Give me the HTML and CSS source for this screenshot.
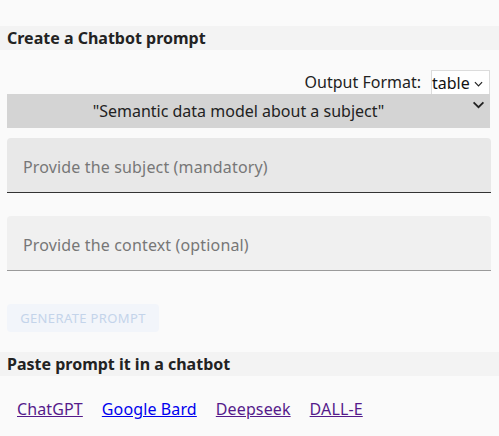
FILE: index.html
```html
<!DOCTYPE html>
<html>
<head>
<meta charset="utf-8">
<link rel="stylesheet" href="styles.css">
</head>
<body>
<div class="page">
  <h2 class="section-title">Create a Chatbot prompt</h2>
  <div class="form">
    <div class="format-row">
      <span class="format-label">Output Format:</span>
      <div class="small-select">table<svg class="small-chev" viewBox="0 0 10 6" width="9" height="6"><path d="M1 1 L5 5 L9 1" fill="none" stroke="#222" stroke-width="1.3"/></svg></div>
    </div>
    <div class="big-select">
      <span>"Semantic data model about a subject"</span>
      <svg class="big-chev" viewBox="0 0 14 9" width="13" height="8"><path d="M1.5 1.5 L7 7 L12.5 1.5" fill="none" stroke="#222" stroke-width="2"/></svg>
    </div>
    <div class="field field-filled"><span class="placeholder">Provide the subject (mandatory)</span></div>
    <div class="field field-light"><span class="placeholder">Provide the context (optional)</span></div>
    <div class="button-row"><button class="gen-btn" disabled>GENERATE PROMPT</button></div>
  </div>
  <h2 class="section-title second">Paste prompt it in a chatbot</h2>
  <div class="links">
    <a class="link visited" href="#">ChatGPT</a>
    <a class="link" href="#">Google Bard</a>
    <a class="link visited" href="#">Deepseek</a>
    <a class="link visited" href="#">DALL-E</a>
  </div>
</div>
</body>
</html>
```

FILE: styles.css
```css
html, body {
  margin: 0;
  padding: 0;
  background: #fafafa;
}
body {
  font-family: "Noto Sans", "Open Sans", sans-serif;
  color: #222;
  width: 499px;
  height: 436px;
  overflow: hidden;
}
.page {
  padding-top: 26px;
}
.section-title {
  margin: 0;
  height: 24px;
  line-height: 24px;
  background: #f3f3f3;
  padding-left: 7px;
  font-size: 16px;
  font-weight: 700;
  color: #222;
}
.form {
  padding: 20px 9px 0 7px;
}
.format-row {
  display: flex;
  justify-content: flex-end;
  align-items: center;
  height: 24px;
}
.format-label {
  font-size: 16px;
  color: #222;
  margin-right: 10px;
}
.small-select {
  box-sizing: border-box;
  width: 59px;
  height: 24px;
  background: #fff;
  border: 1px solid #dcdcdc;
  border-bottom: none;
  font-size: 16px;
  line-height: 24px;
  padding-left: 0;
  padding-top: 1px;
  display: flex;
  align-items: center;
  gap: 4px;
  color: #111;
}
.small-chev {
  margin-top: 2px;
}
.big-select {
  position: relative;
  height: 34px;
  background: #d4d4d4;
  display: flex;
  align-items: center;
  justify-content: center;
  padding-right: 20px;
  font-size: 16px;
  color: #222;
}
.big-chev {
  position: absolute;
  right: 5px;
  top: 7px;
}
.field {
  box-sizing: border-box;
  height: 55px;
  margin-top: 10px;
  border-radius: 4px 4px 0 0;
  display: flex;
  align-items: center;
  padding-left: 16px;
  margin-right: -1px;
}
.field-filled {
  background: #e8e8e8;
  border-bottom: 1px solid #333;
}
.field-light {
  margin-top: 23px;
  background: #f0f0f0;
  border-bottom: 1px solid #9a9a9a;
}
.placeholder {
  font-size: 16px;
  letter-spacing: 0.15px;
  color: #777;
  margin-top: 3px;
}
.button-row {
  margin-top: 33px;
  margin-bottom: 20px;
}
.gen-btn {
  font-family: "Noto Sans", "Open Sans", sans-serif;
  height: 28px;
  width: 152px;
  border: none;
  border-radius: 4px;
  background: #f2f5fa;
  color: #c4d4ea;
  font-size: 13px;
  letter-spacing: 0.37px;
  font-weight: 400;
  padding: 0;
}
.links {
  display: flex;
  gap: 19px;
  padding: 22px 0 0 17px;
  font-size: 16px;
  letter-spacing: 0.12px;
}
.link {
  color: #0000ee;
}
.link.visited {
  color: #551a8b;
}
```
